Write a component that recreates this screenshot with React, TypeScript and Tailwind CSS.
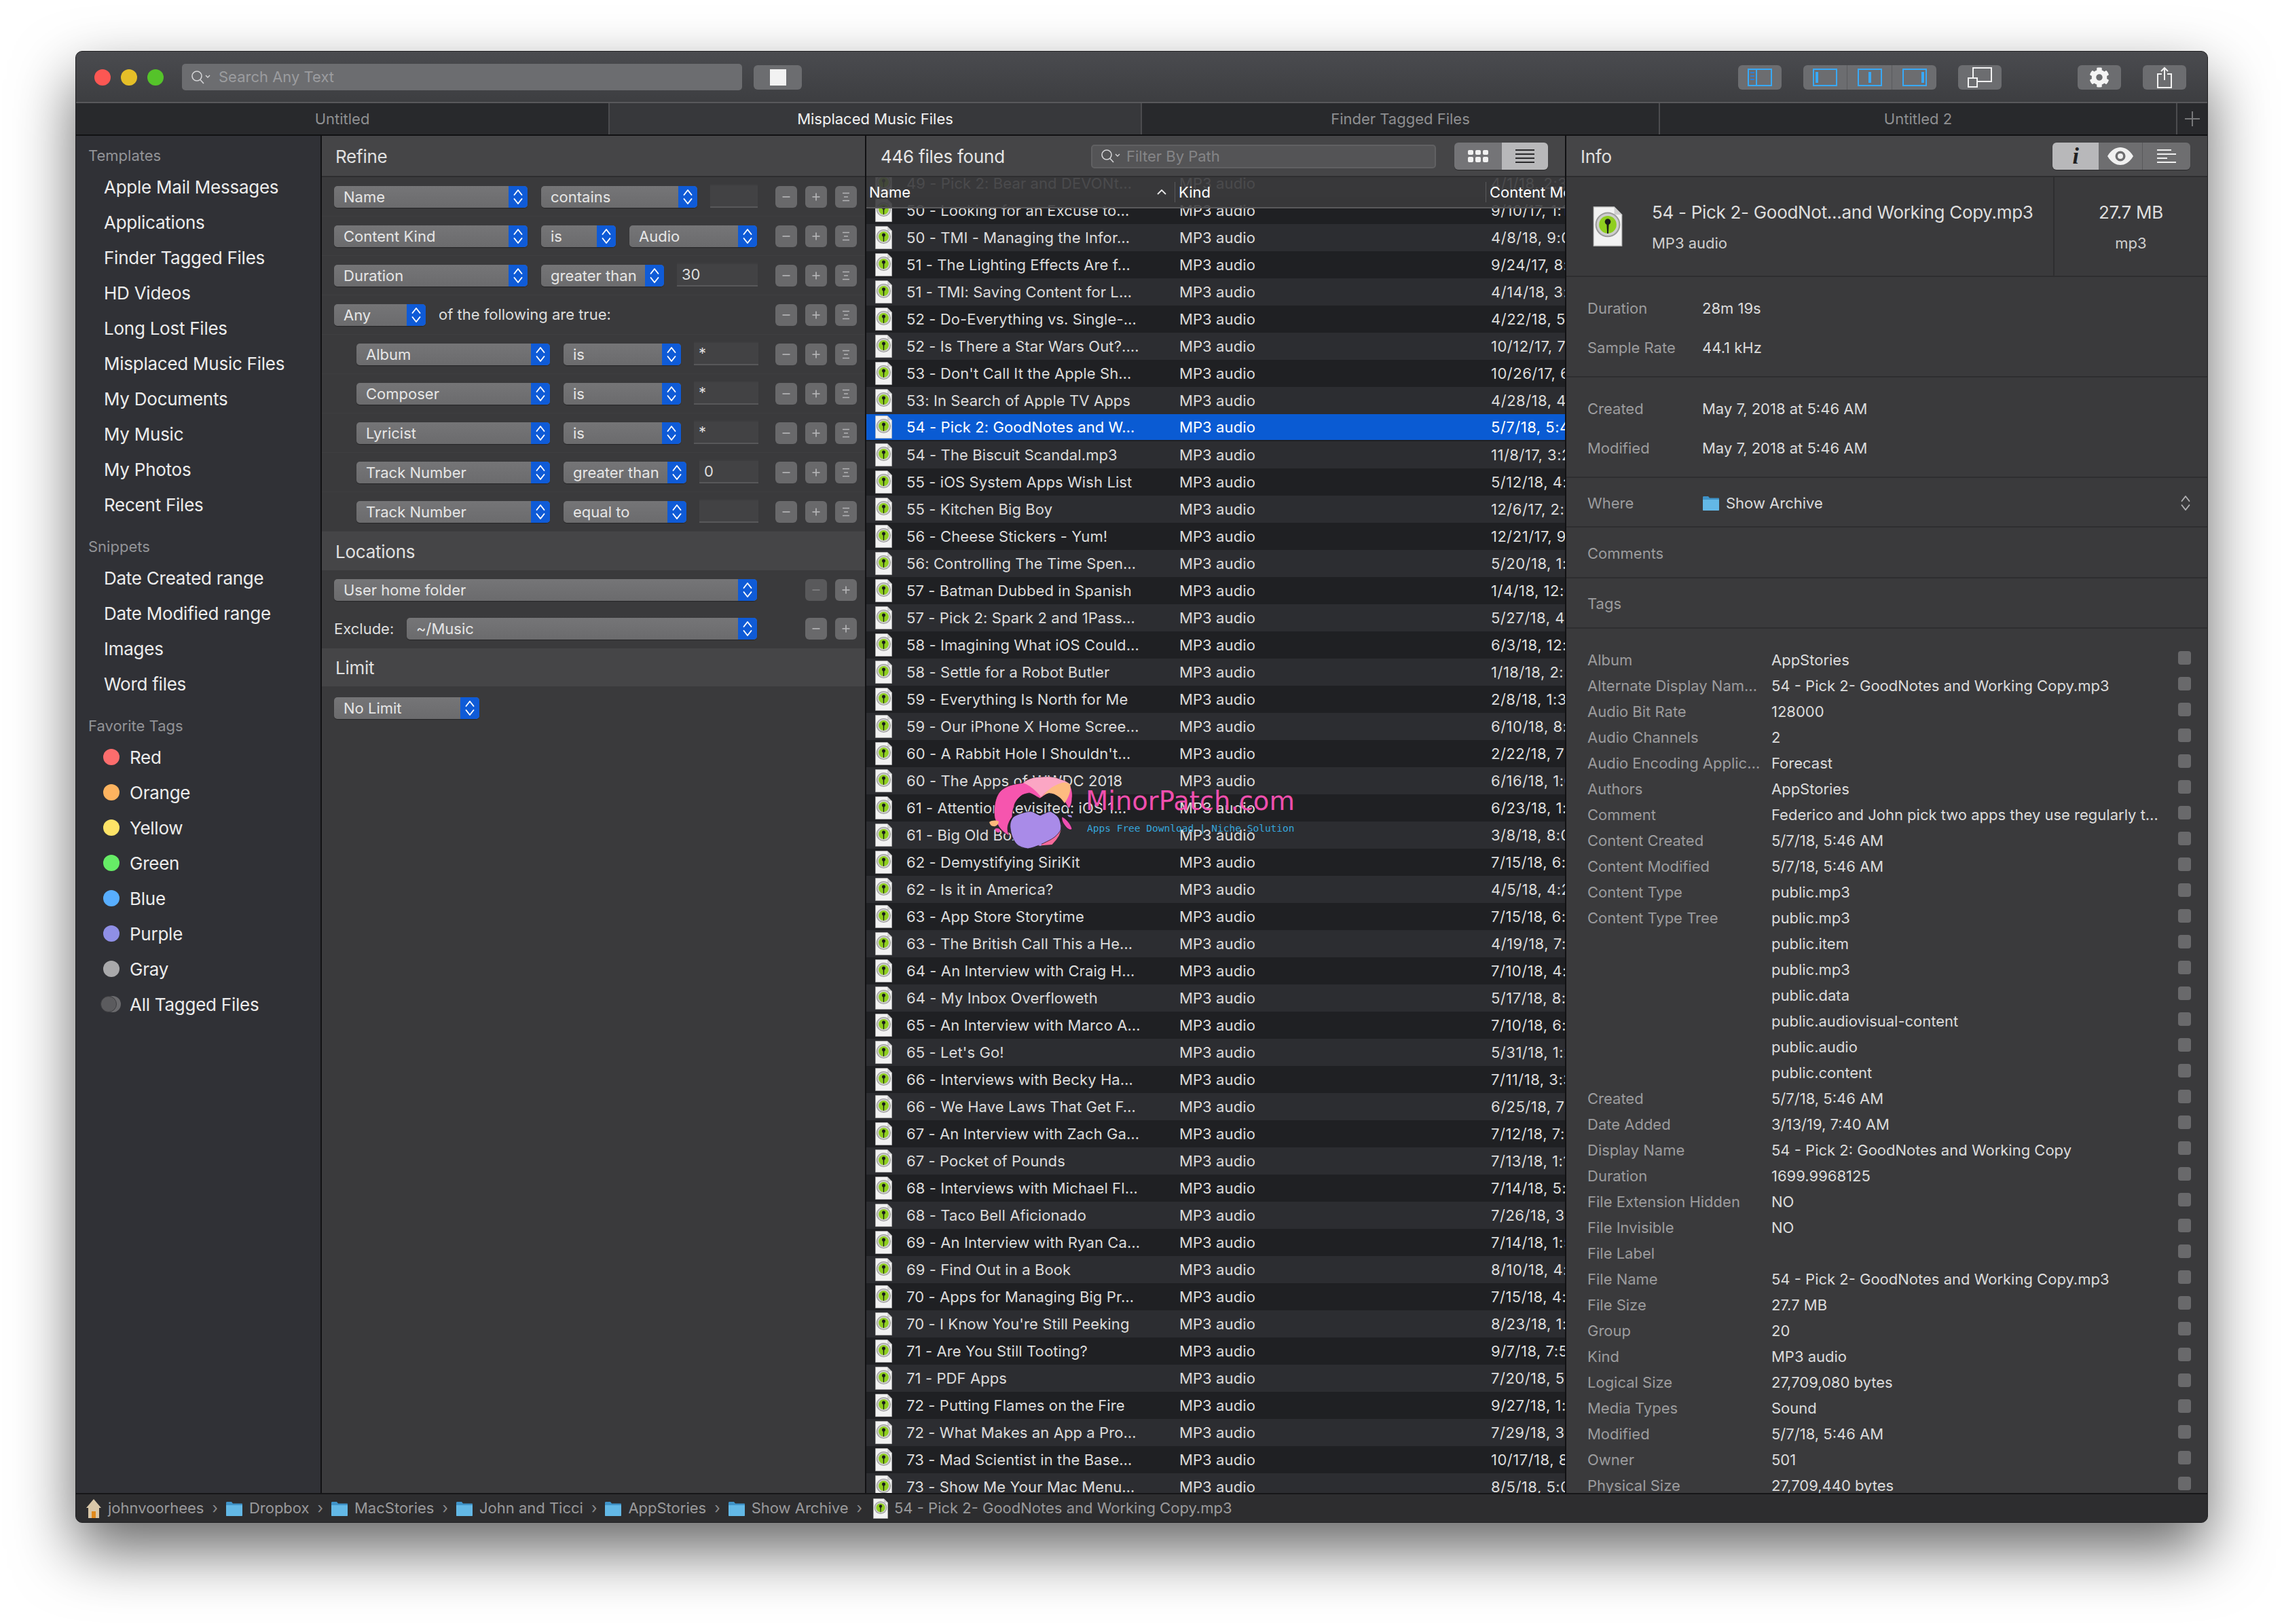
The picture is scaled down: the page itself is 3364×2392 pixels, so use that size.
import { FaCog } from 'react-icons/fa';

const templates = ['Apple Mail Messages', 'Applications', 'Finder Tagged Files', 'HD Videos', 'Long Lost Files', 'Misplaced Music Files', 'My Documents', 'My Music', 'My Photos', 'Recent Files'];
const snippets = ['Date Created range', 'Date Modified range', 'Images', 'Word files'];
const tags = [
  { name: 'Red', dot: 'bg-[#fc6d6d]' },
  { name: 'Orange', dot: 'bg-[#fdb35f]' },
  { name: 'Yellow', dot: 'bg-[#fde367]' },
  { name: 'Green', dot: 'bg-[#66ec66]' },
  { name: 'Blue', dot: 'bg-[#58aeff]' },
  { name: 'Purple', dot: 'bg-[#8f8fe6]' },
  { name: 'Gray', dot: 'bg-[#a9a9ab]' },
];

const files: [string, string][] = [
  ['49 - Pick 2: Bear and DEVONt…', '4/1/18, 2:30 PM'],
  ['50 - Looking for an Excuse to…', '9/10/17, 1:15 PM'],
  ['50 - TMI - Managing the Infor…', '4/8/18, 9:00 AM'],
  ['51 - The Lighting Effects Are f…', '9/24/17, 8:12 AM'],
  ['51 - TMI: Saving Content for L…', '4/14/18, 3:20 PM'],
  ['52 - Do-Everything vs. Single-…', '4/22/18, 5:41 AM'],
  ['52 - Is There a Star Wars Out?.…', '10/12/17, 7:03 AM'],
  ["53 - Don't Call It the Apple Sh…", '10/26/17, 6:44 AM'],
  ['53: In Search of Apple TV Apps', '4/28/18, 4:10 PM'],
  ['54 - Pick 2: GoodNotes and W…', '5/7/18, 5:46 AM'],
  ['54 - The Biscuit Scandal.mp3', '11/8/17, 3:22 PM'],
  ['55 - iOS System Apps Wish List', '5/12/18, 4:05 PM'],
  ['55 - Kitchen Big Boy', '12/6/17, 2:18 PM'],
  ['56 - Cheese Stickers - Yum!', '12/21/17, 9:30 AM'],
  ['56: Controlling The Time Spen…', '5/20/18, 1:17 PM'],
  ['57 - Batman Dubbed in Spanish', '1/4/18, 12:02 PM'],
  ['57 - Pick 2: Spark 2 and 1Pass…', '5/27/18, 4:33 PM'],
  ['58 - Imagining What iOS Could…', '6/3/18, 12:48 PM'],
  ['58 - Settle for a Robot Butler', '1/18/18, 2:56 PM'],
  ['59 - Everything Is North for Me', '2/8/18, 1:30 PM'],
  ['59 - Our iPhone X Home Scree…', '6/10/18, 8:21 AM'],
  ["60 - A Rabbit Hole I Shouldn't…", '2/22/18, 7:14 AM'],
  ['60 - The Apps of WWDC 2018', '6/16/18, 1:09 PM'],
  ['61 - Attention Revisited: iOS 1…', '6/23/18, 1:40 PM'],
  ['61 - Big Old Box', '3/8/18, 8:05 AM'],
  ['62 - Demystifying SiriKit', '7/15/18, 6:11 AM'],
  ['62 - Is it in America?', '4/5/18, 4:27 PM'],
  ['63 - App Store Storytime', '7/15/18, 6:32 AM'],
  ['63 - The British Call This a He…', '4/19/18, 7:50 AM'],
  ['64 - An Interview with Craig H…', '7/10/18, 4:16 PM'],
  ['64 - My Inbox Overfloweth', '5/17/18, 8:44 AM'],
  ['65 - An Interview with Marco A…', '7/10/18, 6:02 PM'],
  ["65 - Let's Go!", '5/31/18, 1:25 PM'],
  ['66 - Interviews with Becky Ha…', '7/11/18, 3:38 PM'],
  ['66 - We Have Laws That Get F…', '6/25/18, 7:19 AM'],
  ['67 - An Interview with Zach Ga…', '7/12/18, 7:47 AM'],
  ['67 - Pocket of Pounds', '7/13/18, 1:13 PM'],
  ['68 - Interviews with Michael Fl…', '7/14/18, 5:28 PM'],
  ['68 - Taco Bell Aficionado', '7/26/18, 3:06 PM'],
  ['69 - An Interview with Ryan Ca…', '7/14/18, 1:52 PM'],
  ['69 - Find Out in a Book', '8/10/18, 4:39 PM'],
  ['70 - Apps for Managing Big Pr…', '7/15/18, 4:23 PM'],
  ["70 - I Know You're Still Peeking", '8/23/18, 1:01 PM'],
  ['71 - Are You Still Tooting?', '9/7/18, 7:55 AM'],
  ['71 - PDF Apps', '7/20/18, 5:35 PM'],
  ['72 - Putting Flames on the Fire', '9/27/18, 1:12 PM'],
  ['72 - What Makes an App a Pro…', '7/29/18, 3:49 PM'],
  ['73 - Mad Scientist in the Base…', '10/17/18, 8:08 AM'],
  ['73 - Show Me Your Mac Menu…', '8/5/18, 5:02 PM'],
];

const metadata: [string, string][] = [
  ['Album', 'AppStories'],
  ['Alternate Display Nam…', '54 - Pick 2- GoodNotes and Working Copy.mp3'],
  ['Audio Bit Rate', '128000'],
  ['Audio Channels', '2'],
  ['Audio Encoding Applic…', 'Forecast'],
  ['Authors', 'AppStories'],
  ['Comment', 'Federico and John pick two apps they use regularly t…'],
  ['Content Created', '5/7/18, 5:46 AM'],
  ['Content Modified', '5/7/18, 5:46 AM'],
  ['Content Type', 'public.mp3'],
  ['Content Type Tree', 'public.mp3'],
  ['', 'public.item'],
  ['', 'public.mp3'],
  ['', 'public.data'],
  ['', 'public.audiovisual-content'],
  ['', 'public.audio'],
  ['', 'public.content'],
  ['Created', '5/7/18, 5:46 AM'],
  ['Date Added', '3/13/19, 7:40 AM'],
  ['Display Name', '54 - Pick 2: GoodNotes and Working Copy'],
  ['Duration', '1699.9968125'],
  ['File Extension Hidden', 'NO'],
  ['File Invisible', 'NO'],
  ['File Label', ''],
  ['File Name', '54 - Pick 2- GoodNotes and Working Copy.mp3'],
  ['File Size', '27.7 MB'],
  ['Group', '20'],
  ['Kind', 'MP3 audio'],
  ['Logical Size', '27,709,080 bytes'],
  ['Media Types', 'Sound'],
  ['Modified', '5/7/18, 5:46 AM'],
  ['Owner', '501'],
  ['Physical Size', '27,709,440 bytes'],
];

function Mp3Icon({ className = 'w-[25px] h-[34px] shrink-0' }: { className?: string }) {
  return (
    <svg viewBox="0 0 25 34" className={className}>
      <path d="M0.5 0.5H18L24.5 7V33.5H0.5Z" fill="#f2f2f2" stroke="#bdbdbd" strokeWidth="0.6" />
      <path d="M18 0.5V7H24.5Z" fill="#cfcfcf" />
      <circle cx="12.5" cy="15.5" r="10.6" fill="#9a9a9a" />
      <circle cx="12.5" cy="15.5" r="9.4" fill="#cdcdcd" />
      <circle cx="12.5" cy="15.5" r="7.4" fill="#8fce1f" />
      <circle cx="12.5" cy="13" r="2.5" fill="#1a1a1a" />
      <path d="M11.5 13.5H13.5L13 23H12Z" fill="#1a1a1a" />
    </svg>
  );
}

function Chevrons({ color = '#ffffff' }: { color?: string }) {
  return (
    <svg viewBox="0 0 16 26" className="w-[16px] h-[26px]" fill="none" stroke={color} strokeWidth="1.9" strokeLinecap="round" strokeLinejoin="round">
      <path d="M2.5 10L8 3L13.5 10" />
      <path d="M2.5 16L8 23L13.5 16" />
    </svg>
  );
}

function Popup({ label, width }: { label: string; width: string }) {
  return (
    <div className={`${width} h-[32px] shrink-0 flex rounded-[5px] overflow-hidden bg-gradient-to-b from-[#757577] to-[#6b6b6d] shadow-[0_1px_1px_rgba(0,0,0,0.35)]`}>
      <div className="flex-1 min-w-0 pl-[14px] pt-[1px] flex items-center text-[22px] text-[#e6e6e6] whitespace-nowrap overflow-hidden">{label}</div>
      <div className="w-[28px] bg-[#0f5bd7] flex items-center justify-center">
        <Chevrons />
      </div>
    </div>
  );
}

function Field({ width, value = '' }: { width: string; value?: string }) {
  return (
    <div className={`${width} h-[35px] mb-[3px] shrink-0 bg-[#424244] border-t-2 border-t-[#3d3d3f] border-b-2 border-b-[#58585a] pl-[7px] flex items-center text-[22px] text-[#dedede]`}>
      {value}
    </div>
  );
}

function MiniButton({ kind, dim = false }: { kind: 'minus' | 'plus' | 'menu'; dim?: boolean }) {
  const stroke = dim ? '#828284' : '#b4b4b6';
  return (
    <div className={`w-[32px] h-[32px] rounded-[6px] flex items-center justify-center ${dim ? 'bg-[#59595b]' : 'bg-[#69696b]'}`}>
      <svg viewBox="0 0 16 16" className="w-[16px] h-[16px]" fill="none" stroke={stroke} strokeWidth="1.7">
        {kind !== 'menu' && <path d="M2.5 8H13.5" />}
        {kind === 'plus' && <path d="M8 2.5V13.5" />}
        {kind === 'menu' && <path d="M3 2.5H13M5 8H11M3 13.5H13" />}
      </svg>
    </div>
  );
}

function Steppers({ menu = true, dim = false }: { menu?: boolean; dim?: boolean }) {
  return (
    <div className="ml-auto flex gap-[12px]">
      <MiniButton kind="minus" dim={dim} />
      <MiniButton kind="plus" />
      {menu && <MiniButton kind="menu" />}
    </div>
  );
}

function CriteriaRow({ nested = false, children }: { nested?: boolean; children: React.ReactNode }) {
  return (
    <div className={`h-[58px] flex items-center pr-[12px] border-b border-[#3e3e40] ${nested ? 'pl-[51px]' : 'pl-[18px]'}`}>
      {children}
    </div>
  );
}

function SectionHeader({ title, height }: { title: string; height: string }) {
  return <div className={`${height} pl-[20px] pt-[1px] flex items-center bg-[#454547] text-[26px] tracking-[-0.25px] text-[#e0e0e0]`}>{title}</div>;
}

function SideGroup({ title, items, className = '' }: { title: string; items: string[]; className?: string }) {
  return (
    <div className={className}>
      <div className="h-[30px] pl-[18px] flex items-center text-[22px] text-[#929397]">{title}</div>
      <div className="mt-[5px]">
        {items.map((item) => (
          <div key={item} className="h-[52px] pl-[41px] flex items-center text-[26px] tracking-[-0.25px] text-[#ececec]">{item}</div>
        ))}
      </div>
    </div>
  );
}

function Folder({ className = 'w-[26px] h-[24px]' }: { className?: string }) {
  return (
    <svg viewBox="0 0 26 24" className={className}>
      <path d="M1 3.5C1 2.5 1.7 2 2.5 2H9L11 4.5H24C24.7 4.5 25 5 25 5.5V8H1Z" fill="#3f93c8" />
      <path d="M1 7H25V22C25 22.7 24.6 23 24 23H2C1.4 23 1 22.7 1 22Z" fill="#63b8e6" />
    </svg>
  );
}

function Crumb({ label, icon, arrow = true }: { label: string; icon: React.ReactNode; arrow?: boolean }) {
  return (
    <div className="flex items-center">
      {icon}
      <span className="ml-[9px] whitespace-nowrap">{label}</span>
      {arrow && <span className="ml-[12px] text-[#8c8c8e]">›</span>}
    </div>
  );
}

function SearchGlyph() {
  return (
    <svg viewBox="0 0 32 24" className="w-[32px] h-[24px] shrink-0" fill="none" stroke="#d4d4d6" strokeWidth="1.6">
      <circle cx="10" cy="10" r="7" />
      <path d="M15 15.5L20 21" />
      <path d="M23 9L26 12L29 9" strokeWidth="1.4" />
    </svg>
  );
}

function ToolButton({ children, className = '' }: { children: React.ReactNode; className?: string }) {
  return <div className={`h-[36px] bg-[#6c6d70] flex items-center justify-center ${className}`}>{children}</div>;
}

function PaneIcon({ bar }: { bar: string }) {
  return (
    <svg viewBox="0 0 36 26" className="w-[36px] h-[26px]" fill="none" stroke="#38a9f8" strokeWidth="2">
      <rect x="1" y="1" width="34" height="24" />
      <path d={bar} strokeWidth="4" />
    </svg>
  );
}

function WatermarkLogo() {
  return (
    <svg viewBox="0 0 123 107" className="absolute left-[181px] top-[882px] w-[123px] h-[107px]">
      <path d="M8 43C10 30 14 24 19 20C30 12 40 12 50 10C58 4 66 2 73 2C84 1 92 1 99 3C108 6 116 8 119 13C122 20 123 26 122 33C122 40 120 45 117 48C114 42 111 36 107 33C100 28 94 25 88 25C84 26 79 30 75 33C70 31 64 26 59 25C54 26 49 27 46 30C41 34 37 40 36 47C34 52 34 56 34 60C28 68 24 78 30 88C20 84 12 74 8 62C7 56 7 50 8 43Z" fill="#f655ae" stroke="#111113" strokeWidth="0.7" />
      <path d="M50 10C58 4 66 2 73 2C84 1 92 1 99 3C108 6 116 8 119 13C112 10 104 11 98 15C90 19 82 24 76 31C70 22 60 14 50 10Z" fill="#fba6c4" />
      <path d="M73 33C78 30 83 24 88 20C94 15 100 12 107 10C112 9 117 10 119 12C121 20 118 30 111 40C108 36 106 33 103 31C98 27 93 25 88 25C83 26 78 30 73 33Z" fill="#fdbb80" />
      <path d="M105 72C104 80 98 88 88 95C82 98 74 100 66 102L92 100C100 92 106 82 105 72Z" fill="#f76a9a" stroke="#f76a9a" strokeWidth="2" />
      <path d="M31 77C30 70 32 64 36 60C42 56 52 53 61 52C66 53 70 56 75 58C80 56 85 53 90 52C96 55 101 59 103 63C106 70 106 76 105 80C100 88 94 92 88 95C78 100 68 105 57 107C50 106 44 104 40 100C35 94 32 86 31 77Z" fill="#a98be8" stroke="#111113" strokeWidth="0.7" />
      <path d="M107 60C112 62 120 70 122 78C120 80 118 79 115 77C110 72 106 66 107 60Z" fill="#ee4fb1" stroke="#111113" strokeWidth="0.6" />
      <path d="M0 68C4 65 10 65 14 67C14 71 10 75 6 74C3 74 1 71 0 68Z" fill="#fdb77b" />
      <path d="M8 78C11 76 15 77 16 79C16 83 14 84 12 83C10 82 9 80 8 78Z" fill="#ee4fb1" />
      <path d="M115 57L121 58L122 61L117 60Z" fill="#a98be8" />
      <circle cx="75" cy="101" r="2" fill="#a98be8" />
    </svg>
  );
}

export default function App() {
  return (
    <div className="w-[3364px] h-[2392px] bg-white pl-[111px] pt-[75px] font-[family-name:Inter,sans-serif] overflow-hidden">
      <div className="w-[3141px] h-[2168px] flex flex-col rounded-[10px] overflow-hidden border border-[#1f1f21] shadow-[0_40px_90px_rgba(0,0,0,0.6)] bg-[#3a3a3c]">
        {/* Toolbar */}
        <div className="h-[76px] shrink-0 flex items-center pl-[27px] pr-[31px] pt-[1px] bg-gradient-to-b from-[#4a4b4f] to-[#3d3e41] border-b-2 border-[#58585b]">
          <div className="flex gap-[15px]">
            <div className="w-[24px] h-[24px] rounded-full bg-[#fc5753]" />
            <div className="w-[24px] h-[24px] rounded-full bg-[#e5bf28]" />
            <div className="w-[24px] h-[24px] rounded-full bg-[#55c32a]" />
          </div>
          <div className="ml-[27px] w-[825px] h-[39px] rounded-[5px] bg-[#6c6d70] flex items-center pl-[12px] gap-[10px] text-[22px] text-[#9b9c9f]">
            <SearchGlyph />
            <span>Search Any Text</span>
          </div>
          <ToolButton className="ml-[17px] w-[71px] rounded-[6px]">
            <div className="w-[24px] h-[24px] bg-[#f2f2f2]" />
          </ToolButton>
          <ToolButton className="ml-auto w-[64px] rounded-[6px]">
            <svg viewBox="0 0 36 26" className="w-[36px] h-[26px]" fill="none" stroke="#38a9f8" strokeWidth="2">
              <rect x="1" y="1" width="34" height="24" />
              <path d="M13 1V25" />
              <path d="M4 6H10M4 11H10M4 16H10" stroke="#2e7fd6" strokeWidth="2" />
            </svg>
          </ToolButton>
          <div className="ml-[32px] flex rounded-[6px] overflow-hidden">
            <ToolButton className="w-[65px] border-r border-[#5a5b5d]"><PaneIcon bar="M6 5V21" /></ToolButton>
            <ToolButton className="w-[66px] border-r border-[#5a5b5d]"><PaneIcon bar="M18 5V21" /></ToolButton>
            <ToolButton className="w-[65px]"><PaneIcon bar="M30 5V21" /></ToolButton>
          </div>
          <ToolButton className="ml-[32px] w-[64px] rounded-[6px]">
            <svg viewBox="0 0 36 30" className="w-[36px] h-[30px]" fill="none" stroke="#f2f2f2" strokeWidth="2">
              <path d="M8 16V1H35V21H15" />
              <rect x="1" y="16" width="13" height="13" />
            </svg>
          </ToolButton>
          <ToolButton className="ml-[112px] w-[64px] rounded-[6px]">
            <FaCog className="w-[30px] h-[30px] text-[#f4f4f4]" />
          </ToolButton>
          <ToolButton className="ml-[32px] w-[64px] rounded-[6px]">
            <svg viewBox="0 0 24 32" className="w-[24px] h-[32px]" fill="none" stroke="#f2f2f2" strokeWidth="2">
              <path d="M8 11H2V31H22V11H16" />
              <path d="M12 20V2M7 7L12 2L17 7" />
            </svg>
          </ToolButton>
        </div>

        {/* Tabs */}
        <div className="h-[48px] shrink-0 flex bg-[#28292c] border-b-2 border-[#111113] text-[22px] text-[#8e8f91]">
          <div className="w-[784px] pt-[1px] flex items-center justify-center">Untitled</div>
          <div className="w-[784px] pt-[1px] flex items-center justify-center border-l-2 border-[#4c4c4f] bg-[#37383b] text-[#f2f2f2]">Misplaced Music Files</div>
          <div className="w-[763px] pt-[1px] flex items-center justify-center border-l-2 border-[#4c4c4f]">Finder Tagged Files</div>
          <div className="w-[762px] pt-[1px] flex items-center justify-center border-l-2 border-[#4c4c4f]">Untitled 2</div>
          <div className="flex-1 flex items-center justify-center border-l-2 border-[#4c4c4f]">
            <svg viewBox="0 0 24 24" className="w-[24px] h-[24px]" fill="none" stroke="#77787a" strokeWidth="2"><path d="M12 1V23M1 12H23" /></svg>
          </div>
        </div>

        {/* Panels */}
        <div className="flex-1 min-h-0 flex">
          {/* Sidebar */}
          <div className="w-[362px] shrink-0 bg-[#303136] border-r-2 border-[#111113] pt-[14px]">
            <SideGroup title="Templates" items={templates} />
            <SideGroup title="Snippets" items={snippets} className="mt-[21px]" />
            <div className="mt-[21px]">
              <div className="h-[30px] pl-[18px] flex items-center text-[22px] text-[#929397]">Favorite Tags</div>
              <div className="mt-[5px]">
                {tags.map((tag) => (
                  <div key={tag.name} className="h-[52px] pl-[40px] flex items-center text-[26px] tracking-[-0.25px] text-[#ececec]">
                    <span className={`w-[24px] h-[24px] rounded-full mr-[15px] ${tag.dot}`} />
                    {tag.name}
                  </div>
                ))}
                <div className="h-[52px] pl-[36px] flex items-center text-[26px] tracking-[-0.25px] text-[#ececec]">
                  <span className="relative w-[30px] h-[24px] mr-[13px]">
                    <span className="absolute left-[6px] w-[24px] h-[24px] rounded-full bg-[#6a6a6d]" />
                    <span className="absolute left-0 w-[24px] h-[24px] rounded-full bg-[#5b5b5e] border border-[#3e3e41]" />
                  </span>
                  All Tagged Files
                </div>
              </div>
            </div>
          </div>

          {/* Refine */}
          <div className="w-[802px] shrink-0 bg-[#3a3a3c] border-r-2 border-[#111113]">
            <div className="h-[61px] pl-[20px] pt-[1px] flex items-center bg-[#454547] border-b-2 border-[#2e2e30] text-[26px] tracking-[-0.25px] text-[#e0e0e0]">Refine</div>
            <CriteriaRow>
              <Popup label="Name" width="w-[285px]" />
              <div className="ml-[20px]"><Popup label="contains" width="w-[230px]" /></div>
              <div className="ml-[19px]"><Field width="w-[70px]" /></div>
              <Steppers />
            </CriteriaRow>
            <CriteriaRow>
              <Popup label="Content Kind" width="w-[285px]" />
              <div className="ml-[20px]"><Popup label="is" width="w-[110px]" /></div>
              <div className="ml-[20px]"><Popup label="Audio" width="w-[188px]" /></div>
              <Steppers />
            </CriteriaRow>
            <CriteriaRow>
              <Popup label="Duration" width="w-[285px]" />
              <div className="ml-[20px]"><Popup label="greater than" width="w-[181px]" /></div>
              <div className="ml-[19px]"><Field width="w-[119px]" value="30" /></div>
              <Steppers />
            </CriteriaRow>
            <CriteriaRow>
              <Popup label="Any" width="w-[135px]" />
              <span className="ml-[19px] text-[22px] text-[#dedede]">of the following are true:</span>
              <Steppers />
            </CriteriaRow>
            <CriteriaRow nested>
              <Popup label="Album" width="w-[285px]" />
              <div className="ml-[20px]"><Popup label="is" width="w-[173px]" /></div>
              <div className="ml-[19px]"><Field width="w-[95px]" value="*" /></div>
              <Steppers />
            </CriteriaRow>
            <CriteriaRow nested>
              <Popup label="Composer" width="w-[285px]" />
              <div className="ml-[20px]"><Popup label="is" width="w-[173px]" /></div>
              <div className="ml-[19px]"><Field width="w-[95px]" value="*" /></div>
              <Steppers />
            </CriteriaRow>
            <CriteriaRow nested>
              <Popup label="Lyricist" width="w-[285px]" />
              <div className="ml-[20px]"><Popup label="is" width="w-[173px]" /></div>
              <div className="ml-[19px]"><Field width="w-[95px]" value="*" /></div>
              <Steppers />
            </CriteriaRow>
            <CriteriaRow nested>
              <Popup label="Track Number" width="w-[285px]" />
              <div className="ml-[20px]"><Popup label="greater than" width="w-[181px]" /></div>
              <div className="ml-[19px]"><Field width="w-[87px]" value="0" /></div>
              <Steppers />
            </CriteriaRow>
            <CriteriaRow nested>
              <Popup label="Track Number" width="w-[285px]" />
              <div className="ml-[20px]"><Popup label="equal to" width="w-[181px]" /></div>
              <div className="ml-[19px]"><Field width="w-[87px]" /></div>
              <Steppers />
            </CriteriaRow>

            <SectionHeader title="Locations" height="h-[57px]" />
            <div className="h-[57px] flex items-center pl-[18px] pr-[12px]">
              <Popup label="User home folder" width="w-[623px]" />
              <Steppers menu={false} dim />
            </div>
            <div className="h-[58px] flex items-center pl-[18px] pr-[12px]">
              <span className="w-[107px] text-[22px] text-[#dedede]">Exclude:</span>
              <Popup label="~/Music" width="w-[516px]" />
              <Steppers menu={false} />
            </div>
            <SectionHeader title="Limit" height="h-[56px]" />
            <div className="pl-[18px] pt-[16px]">
              <Popup label="No Limit" width="w-[214px]" />
            </div>
          </div>

          {/* Results */}
          <div className="w-[1031px] shrink-0 border-r-2 border-[#111113] flex flex-col bg-[#1f2023]">
            <div className="h-[61px] shrink-0 flex items-center pl-[21px] bg-[#454547] border-b-2 border-[#2e2e30]">
              <span className="w-[310px] pt-[1px] text-[26px] tracking-[-0.25px] text-[#e6e6e6]">446 files found</span>
              <div className="w-[508px] h-[35px] mt-[1px] rounded-[5px] bg-[#545456] border-2 border-[#606062] flex items-center pl-[11px] gap-[7px] text-[22px] text-[#858587]">
                <SearchGlyph />
                <span>Filter By Path</span>
              </div>
              <div className="ml-[27px] w-[138px] h-[40px] rounded-[6px] overflow-hidden flex shadow-[0_1px_1px_rgba(0,0,0,0.4)]">
                <div className="w-[70px] bg-[#747477] grid grid-cols-3 gap-[3px] px-[20px] py-[11px]">
                  {[0, 1, 2, 3, 4, 5].map((n) => <span key={n} className="rounded-[2px] bg-[#f2f2f2]" />)}
                </div>
                <div className="flex-1 bg-[#b8b8ba] flex items-center justify-center">
                  <svg viewBox="0 0 30 22" className="w-[30px] h-[22px]" fill="none" stroke="#2a2a2c" strokeWidth="2"><path d="M1 2H29M1 8H29M1 14H29M1 20H29" /></svg>
                </div>
              </div>
            </div>
            <div className="relative flex-1 min-h-0 overflow-hidden">
              <div className="-mt-[11px]">
                {files.map(([name, date], i) => {
                  const selected = i === 9;
                  return (
                    <div
                      key={name}
                      className={`h-[40px] flex items-center pl-[13px] text-[22px] tracking-[0.1px] whitespace-nowrap overflow-hidden ${selected ? 'bg-[#0a5bd3] border-b-2 border-[#1f2023] text-white' : i % 2 === 0 ? 'bg-[#2c2d31] text-[#dcdcdc]' : 'bg-[#1f2023] text-[#dcdcdc]'}`}
                    >
                      <Mp3Icon />
                      <span className="ml-[21px] w-[402px] shrink-0 overflow-hidden">{name}</span>
                      <span className="w-[459px] shrink-0">MP3 audio</span>
                      <span className="shrink-0 tracking-[0.5px]">{date}</span>
                    </div>
                  );
                })}
              </div>

              {/* column header floats over the list */}
              <div className="absolute top-0 left-0 right-0 h-[46px] flex items-center bg-[#3a3a3c]/90 border-b-2 border-[#59595b] text-[22px] text-white whitespace-nowrap overflow-hidden">
                <span className="pl-[4px] w-[454px] shrink-0 flex items-center justify-between pr-[12px]">
                  Name
                  <svg viewBox="0 0 14 8" className="w-[14px] h-[8px]" fill="none" stroke="#e8e8e8" strokeWidth="1.8"><path d="M1 7L7 1L13 7" /></svg>
                </span>
                <span className="h-[30px] w-[458px] shrink-0 flex items-center border-l border-[#5a5a5c] pl-[5px]">Kind</span>
                <span className="h-[30px] shrink-0 flex items-center border-l border-[#5a5a5c] pl-[5px]">Content Modified</span>
              </div>

              {/* watermark */}
              <WatermarkLogo />
              <div className="absolute left-[323px] top-[892px] text-[38.5px] leading-[54px] text-[#f04fae] whitespace-nowrap font-[family-name:DejaVu_Sans,sans-serif]">MinorPatch.com</div>
              <div className="absolute left-[325px] top-[950px] text-[14.5px] leading-[18px] text-[#35a6dc] whitespace-nowrap font-[family-name:DejaVu_Sans_Mono,monospace]">Apps Free Download | Niche Solution</div>
            </div>
          </div>

          {/* Info */}
          <div className="flex-1 min-w-0 flex flex-col bg-[#3a3a3c]">
            <div className="h-[61px] shrink-0 pl-[21px] flex items-center bg-[#454547] border-b-2 border-[#2e2e30] text-[26px] tracking-[-0.25px] text-[#e0e0e0]">
              <span className="pt-[1px]">Info</span>
              <div className="ml-auto mr-[25px] w-[203px] h-[40px] rounded-[6px] overflow-hidden flex shadow-[0_1px_1px_rgba(0,0,0,0.4)]">
                <div className="w-[68px] bg-[#b8b8ba] flex items-center justify-center text-[34px] italic font-bold text-[#1f1f21] font-[family-name:Liberation_Serif,serif]">i</div>
                <div className="w-[65px] bg-[#6e6e70] border-r border-[#59595b] flex items-center justify-center">
                  <svg viewBox="0 0 38 26" className="w-[38px] h-[26px]"><path fillRule="evenodd" d="M0 13C6 3 13 0 19 0S32 3 38 13C32 23 25 26 19 26S6 23 0 13ZM19 5.5A7.5 7.5 0 1 0 19 20.5A7.5 7.5 0 1 0 19 5.5ZM19 9A4 4 0 1 1 19 17A4 4 0 1 1 19 9Z" fill="#f0f0f0" /></svg>
                </div>
                <div className="flex-1 bg-[#6e6e70] flex items-center justify-center">
                  <svg viewBox="0 0 30 22" className="w-[30px] h-[22px]" fill="none" stroke="#f0f0f0" strokeWidth="2"><path d="M1 2H22M1 8H29M1 14H16M1 20H29" /></svg>
                </div>
              </div>
            </div>

            <div className="h-[147px] shrink-0 flex border-b-2 border-[#2e2e30]">
              <div className="w-[719px] flex items-center pl-[39px] border-r-2 border-[#2e2e30]">
                <Mp3Icon className="w-[44px] h-[59px]" />
                <div className="ml-[43px] flex flex-col gap-[16px] mt-[1px]">
                  <span className="text-[26px] tracking-[-0.3px] leading-[32px] text-[#dedede] whitespace-nowrap">54 - Pick 2- GoodNot...and Working Copy.mp3</span>
                  <span className="text-[22px] leading-[26px] text-[#cfcfcf]">MP3 audio</span>
                </div>
              </div>
              <div className="flex-1 flex flex-col items-center justify-center gap-[16px] mt-[1px]">
                <span className="text-[26px] tracking-[-0.3px] leading-[32px] text-[#dedede]">27.7 MB</span>
                <span className="text-[22px] leading-[26px] text-[#cfcfcf]">mp3</span>
              </div>
            </div>

            {[
              [['Duration', '28m 19s'], ['Sample Rate', '44.1 kHz']],
              [['Created', 'May 7, 2018 at 5:46 AM'], ['Modified', 'May 7, 2018 at 5:46 AM']],
            ].map((block, b) => (
              <div key={b} className="h-[148px] shrink-0 pt-[17px] pl-[31px] border-b-2 border-[#2e2e30] text-[22px]">
                {block.map(([label, value]) => (
                  <div key={label} className="h-[58px] flex items-center">
                    <span className="w-[169px] text-[#9c9c9e]">{label}</span>
                    <span className="text-[#dcdcdc]">{value}</span>
                  </div>
                ))}
              </div>
            ))}

            <div className="h-[73px] shrink-0 pl-[31px] pr-[24px] pt-[3px] flex items-center border-b-2 border-[#2e2e30] text-[22px]">
              <span className="w-[169px] text-[#9c9c9e]">Where</span>
              <Folder />
              <span className="ml-[9px] text-[#dcdcdc]">Show Archive</span>
              <span className="ml-auto"><Chevrons color="#b0b0b2" /></span>
            </div>
            <div className="h-[75px] shrink-0 pl-[31px] pt-[3px] flex items-center border-b-2 border-[#2e2e30] text-[22px] text-[#9c9c9e]">Comments</div>
            <div className="h-[74px] shrink-0 pl-[31px] pt-[3px] flex items-center border-b-2 border-[#2e2e30] text-[22px] text-[#9c9c9e]">Tags</div>

            <div className="flex-1 min-h-0 overflow-hidden pt-[27px]">
              {metadata.map(([label, value], i) => (
                <div key={i} className="h-[38px] pl-[31px] pr-[24px] flex items-center text-[22px] whitespace-nowrap">
                  <span className="w-[271px] text-[#9c9c9e]">{label}</span>
                  <span className="text-[#dcdcdc]">{value}</span>
                  <span className="ml-auto w-[19px] h-[20px] mb-[6px] rounded-[4px] bg-[#69696b]" />
                </div>
              ))}
            </div>
          </div>
        </div>

        {/* Path bar */}
        <div className="h-[43px] shrink-0 flex items-center pl-[14px] gap-[11px] bg-[#2d2d2f] border-t-2 border-[#161618] text-[22px] text-[#9a9a9c]">
          <Crumb label="johnvoorhees" icon={
            <svg viewBox="0 0 24 30" className="w-[24px] h-[30px]">
              <path d="M12 1L23 14H20V29H4V14H1Z" fill="#d9c7a8" />
              <rect x="9" y="19" width="6" height="10" fill="#e08a1e" />
            </svg>
          } />
          <Crumb label="Dropbox" icon={<Folder />} />
          <Crumb label="MacStories" icon={<Folder />} />
          <Crumb label="John and Ticci" icon={<Folder />} />
          <Crumb label="AppStories" icon={<Folder />} />
          <Crumb label="Show Archive" icon={<Folder />} />
          <Crumb label="54 - Pick 2- GoodNotes and Working Copy.mp3" icon={<Mp3Icon className="ml-[5px] w-[22px] h-[30px]" />} arrow={false} />
        </div>
      </div>
    </div>
  );
}
